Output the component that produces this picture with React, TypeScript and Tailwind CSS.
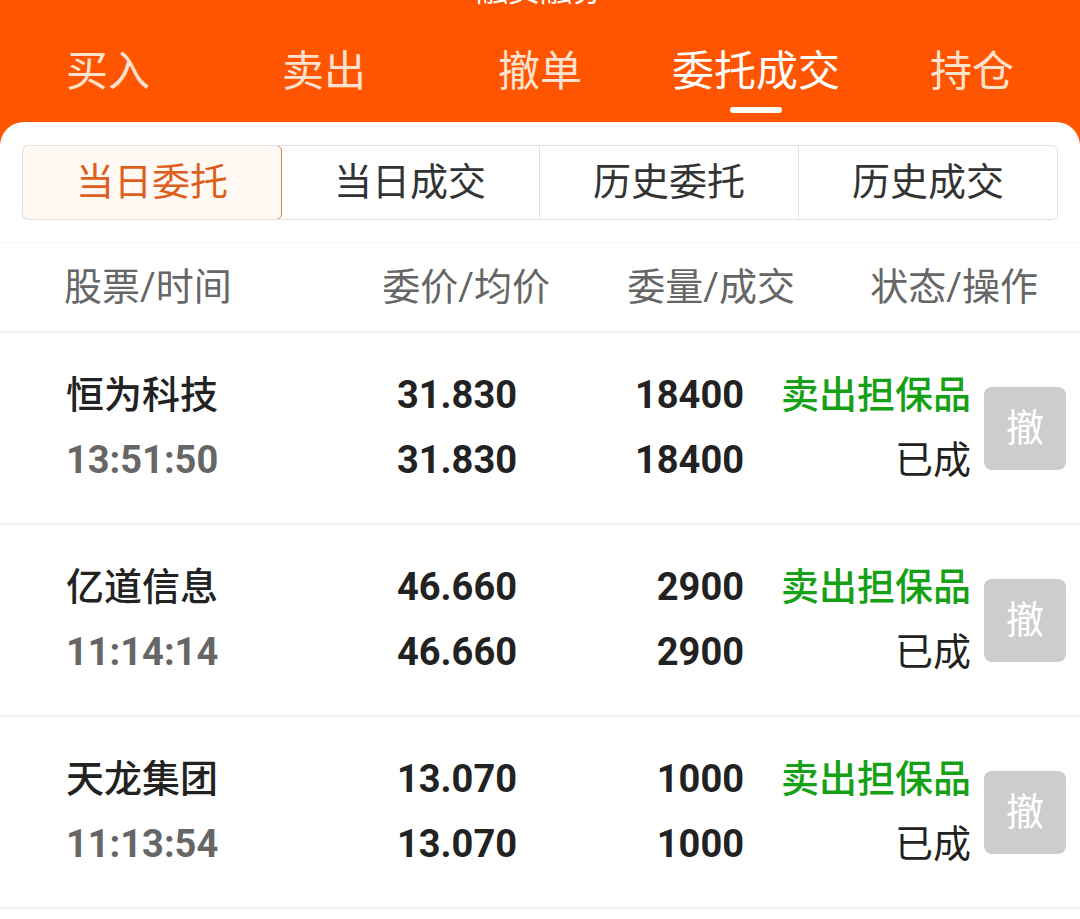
import React from "react";

const cjk = "font-['Roboto','Noto_Sans_CJK_SC',sans-serif]";

const tabs = ["买入", "卖出", "撤单", "委托成交", "持仓"];
const segments = ["当日委托", "当日成交", "历史委托", "历史成交"];

const orders = [
  { name: "恒为科技", time: "13:51:50", price: "31.830", avg: "31.830", qty: "18400", done: "18400" },
  { name: "亿道信息", time: "11:14:14", price: "46.660", avg: "46.660", qty: "2900", done: "2900" },
  { name: "天龙集团", time: "11:13:54", price: "13.070", avg: "13.070", qty: "1000", done: "1000" },
];

export default function App() {
  return (
    <div className={`w-[1080px] h-[919px] overflow-hidden bg-white ${cjk}`}>
      <div className="bg-[#ff5500]">
        {/* title, mostly scrolled out of view */}
        <div className="h-[10px] overflow-hidden text-center">
          <div className="-mt-[30px] text-[32px] leading-[40px] text-white">融资融券</div>
        </div>
        <div className="grid grid-cols-5 h-[112px]">
          {tabs.map((t, i) => (
            <div key={t} className="flex flex-col items-center pt-[40px]">
              <span
                className={`text-[42px] leading-[44px] ${i === 3 ? "text-white" : "text-[#fde2cf]"}`}
              >
                {t}
              </span>
              {i === 3 && <div className="mt-[13px] h-[6px] w-[52px] rounded-full bg-white" />}
            </div>
          ))}
        </div>
        <div className="rounded-t-[24px] bg-white pt-[23px]">
          <div className="mx-[22px] flex h-[75px] overflow-hidden rounded-[6px] border border-[#e2e2e2]">
            {segments.map((s, i) => (
              <div
                key={s}
                className={`flex flex-1 items-center justify-center text-[38px] ${
                  i === 0
                    ? "rounded-[6px] border border-[#e38150] bg-[#fff8f3] text-[#dc5f1c] -m-px"
                    : "border-l border-[#e2e2e2] text-[#333333]"
                } ${i === 1 ? "border-l-0" : ""}`}
              >
                {s}
              </div>
            ))}
          </div>
          <div className="mt-[22px] h-px bg-[#f6f6f6]" />
          <div className="flex h-[88px] items-center pl-[64px] text-[38px] text-[#666666]">
            <div className="w-[250px]">股票/时间</div>
            <div className="w-[236px] text-right">委价/均价</div>
            <div className="w-[245px] text-right">委量/成交</div>
            <div className="w-[243px] text-right">状态/操作</div>
          </div>
          <div className="h-[2px] bg-[#f1f1f1]" />
          {orders.map((o) => (
            <div key={o.name}>
              <div className="flex items-center py-[30px] pl-[66px] leading-[65px]">
                <div className="w-[250px]">
                  <div className="text-[38px] font-medium text-[#222222]">{o.name}</div>
                  <div className="text-[38px] font-bold text-[#666666]">{o.time}</div>
                </div>
                <div className="w-[201px] text-right text-[38px] font-bold text-[#222222]">
                  <div>{o.price}</div>
                  <div>{o.avg}</div>
                </div>
                <div className="w-[227px] text-right text-[38px] font-bold text-[#222222]">
                  <div>{o.qty}</div>
                  <div>{o.done}</div>
                </div>
                <div className="w-[227px] text-right text-[38px]">
                  <div className="font-medium text-[#16a016]">卖出担保品</div>
                  <div className="text-[#222222]">已成</div>
                </div>
                <div className="ml-[13px] flex h-[83px] w-[82px] items-center justify-center rounded-[8px] bg-[#cdcdcd] text-[38px] text-white">
                  撤
                </div>
              </div>
              <div className="h-[2px] bg-[#f1f1f1]" />
            </div>
          ))}
        </div>
      </div>
    </div>
  );
}
